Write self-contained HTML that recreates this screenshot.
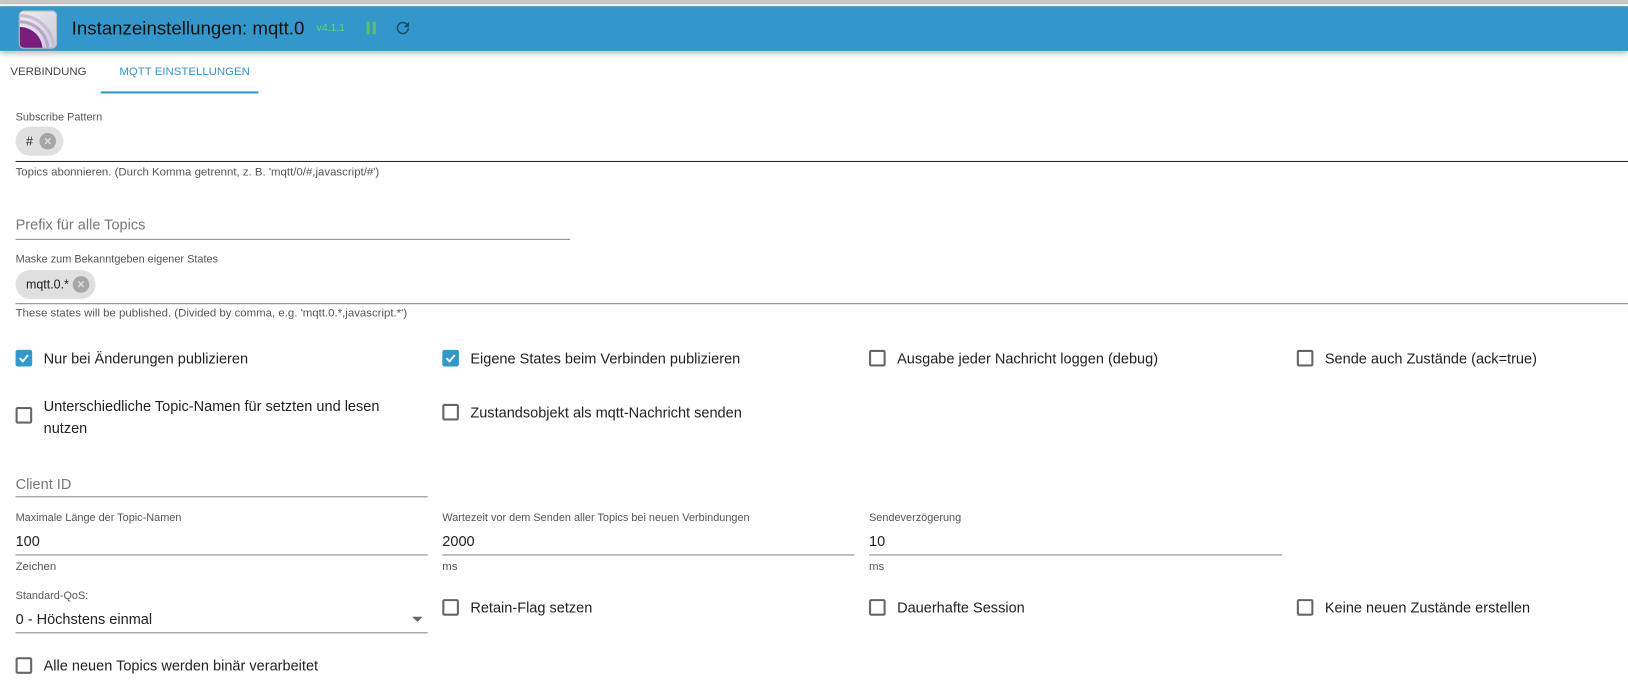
<!DOCTYPE html>
<html><head><meta charset="utf-8"><style>
*{margin:0;padding:0;box-sizing:border-box}
body{width:1628px;height:699px;background:#fff;font-family:"Liberation Sans",Arial,sans-serif;color:#222;position:relative;overflow:hidden}
#w{position:absolute;left:0;top:0;width:1568px;height:673px;transform:scale(1.03827);transform-origin:0 0}
.a{position:absolute;white-space:nowrap}
.top{position:absolute;left:0;top:0;width:1568px;height:4px;background:#c8c8c8}
.bar{position:absolute;left:0;top:6px;width:1568px;height:43px;background:#3497cc;box-shadow:0 2px 6px rgba(0,0,0,.3)}
.lbl{font-size:10.5px;color:#555}
.help{font-size:11px;color:#555}
.ph{font-size:14px;color:#777}
.val{font-size:14px;color:#222}
.line{position:absolute;height:1px;background:#888}
.chip{position:absolute;height:28px;border-radius:14px;background:#e0e0e0;font-size:12px;color:#222;line-height:28px;padding-left:10px}
.x{position:absolute;width:16px;height:16px;border-radius:50%;background:#a6a6a6;top:6px;color:#e0e0e0;font-size:12px;line-height:16px;text-align:center;font-weight:bold}
.cb{position:absolute;width:16px;height:16px;border:2px solid #666;border-radius:2px}
.cb.on{background:#3497cc;border-color:#3497cc}
.ct{font-size:14px;color:#222}
</style></head><body><div id="w">
<div class="top"></div>
<div class="bar"></div>
<div class="a" style="left:18px;top:10px;width:37px;height:37px;border-radius:5px;background:linear-gradient(135deg,#eee,#cfc8dc);overflow:hidden;border:1px solid #bbb">
<svg width="37" height="37" viewBox="0 0 37 37"><circle cx="0" cy="37" r="22" fill="#7b1d7f"/><circle cx="0" cy="37" r="27" fill="none" stroke="#b8a6c8" stroke-width="3"/><circle cx="0" cy="37" r="33" fill="none" stroke="#c8bcd4" stroke-width="3"/></svg></div>
<div class="a" style="left:69px;top:17px;font-size:18px;color:#111">Instanzeinstellungen: mqtt.0</div>
<div class="a" style="left:305px;top:22px;font-size:10px;color:#5ddc5d">v4.1.1</div>
<div class="a" style="left:353px;top:21px;width:3px;height:12px;background:#5cc05c"></div>
<div class="a" style="left:359px;top:21px;width:3px;height:12px;background:#5cc05c"></div>
<svg class="a" style="left:379px;top:18px" width="18" height="18" viewBox="0 0 24 24"><path fill="#1a4f6e" d="M17.65 6.35A7.96 7.96 0 0012 4a8 8 0 108 8h-2a6 6 0 11-1.76-4.24L13 11h7V4z"/></svg>

<div class="a" style="left:10px;top:63px;font-size:11px;color:#444">VERBINDUNG</div>
<div class="a" style="left:115px;top:63px;font-size:11px;color:#3497cc">MQTT EINSTELLUNGEN</div>
<div class="a" style="left:97px;top:88px;width:152px;height:2px;background:#3497cc"></div>

<div class="a lbl" style="left:15px;top:107px">Subscribe Pattern</div>
<div class="chip" style="left:15px;top:122px;width:46px">#<div class="x" style="left:23px">×</div></div>
<div class="line" style="left:15px;top:155px;width:1553px;background:#222"></div>
<div class="a help" style="left:15px;top:160px">Topics abonnieren. (Durch Komma getrennt, z. B. 'mqtt/0/#,javascript/#')</div>

<div class="a ph" style="left:15px;top:208px">Prefix für alle Topics</div>
<div class="line" style="left:15px;top:230px;width:534px"></div>

<div class="a lbl" style="left:15px;top:244px">Maske zum Bekanntgeben eigener States</div>
<div class="chip" style="left:15px;top:260px;width:77px">mqtt.0.*<div class="x" style="left:55px">×</div></div>
<div class="line" style="left:15px;top:292px;width:1553px"></div>
<div class="a help" style="left:15px;top:296px">These states will be published. (Divided by comma, e.g. 'mqtt.0.*,javascript.*')</div>

<div class="cb on" style="left:15px;top:337px"><svg width="12" height="12" viewBox="0 0 12 12" style="position:absolute;left:0;top:0"><path d="M2 6l3 3 5-6" stroke="#fff" stroke-width="1.8" fill="none"/></svg></div>
<div class="a ct" style="left:42px;top:337px">Nur bei Änderungen publizieren</div>
<div class="cb on" style="left:426px;top:337px"><svg width="12" height="12" viewBox="0 0 12 12" style="position:absolute;left:0;top:0"><path d="M2 6l3 3 5-6" stroke="#fff" stroke-width="1.8" fill="none"/></svg></div>
<div class="a ct" style="left:453px;top:337px">Eigene States beim Verbinden publizieren</div>
<div class="cb" style="left:837px;top:337px"></div>
<div class="a ct" style="left:864px;top:337px">Ausgabe jeder Nachricht loggen (debug)</div>
<div class="cb" style="left:1249px;top:337px"></div>
<div class="a ct" style="left:1276px;top:337px">Sende auch Zustände (ack=true)</div>

<div class="cb" style="left:15px;top:392px"></div>
<div class="a ct" style="left:42px;top:381px;line-height:21px">Unterschiedliche Topic-Namen für setzten und lesen<br>nutzen</div>
<div class="cb" style="left:426px;top:389px"></div>
<div class="a ct" style="left:453px;top:389px">Zustandsobjekt als mqtt-Nachricht senden</div>

<div class="a ph" style="left:15px;top:458px">Client ID</div>
<div class="line" style="left:15px;top:478px;width:397px"></div>

<div class="a lbl" style="left:15px;top:493px">Maximale Länge der Topic-Namen</div>
<div class="a val" style="left:15px;top:513px">100</div>
<div class="line" style="left:15px;top:534px;width:397px"></div>
<div class="a help" style="left:15px;top:540px">Zeichen</div>

<div class="a lbl" style="left:426px;top:493px">Wartezeit vor dem Senden aller Topics bei neuen Verbindungen</div>
<div class="a val" style="left:426px;top:513px">2000</div>
<div class="line" style="left:426px;top:534px;width:397px"></div>
<div class="a help" style="left:426px;top:540px">ms</div>

<div class="a lbl" style="left:837px;top:493px">Sendeverzögerung</div>
<div class="a val" style="left:837px;top:513px">10</div>
<div class="line" style="left:837px;top:534px;width:398px"></div>
<div class="a help" style="left:837px;top:540px">ms</div>

<div class="a lbl" style="left:15px;top:568px">Standard-QoS:</div>
<div class="a val" style="left:15px;top:588px">0 - Höchstens einmal</div>
<div class="a" style="left:397px;top:594px;width:0;height:0;border-left:5px solid transparent;border-right:5px solid transparent;border-top:5px solid #666"></div>
<div class="line" style="left:15px;top:609px;width:397px"></div>

<div class="cb" style="left:426px;top:577px"></div>
<div class="a ct" style="left:453px;top:577px">Retain-Flag setzen</div>
<div class="cb" style="left:837px;top:577px"></div>
<div class="a ct" style="left:864px;top:577px">Dauerhafte Session</div>
<div class="cb" style="left:1249px;top:577px"></div>
<div class="a ct" style="left:1276px;top:577px">Keine neuen Zustände erstellen</div>

<div class="cb" style="left:15px;top:633px"></div>
<div class="a ct" style="left:42px;top:633px">Alle neuen Topics werden binär verarbeitet</div>
</div></body></html>
